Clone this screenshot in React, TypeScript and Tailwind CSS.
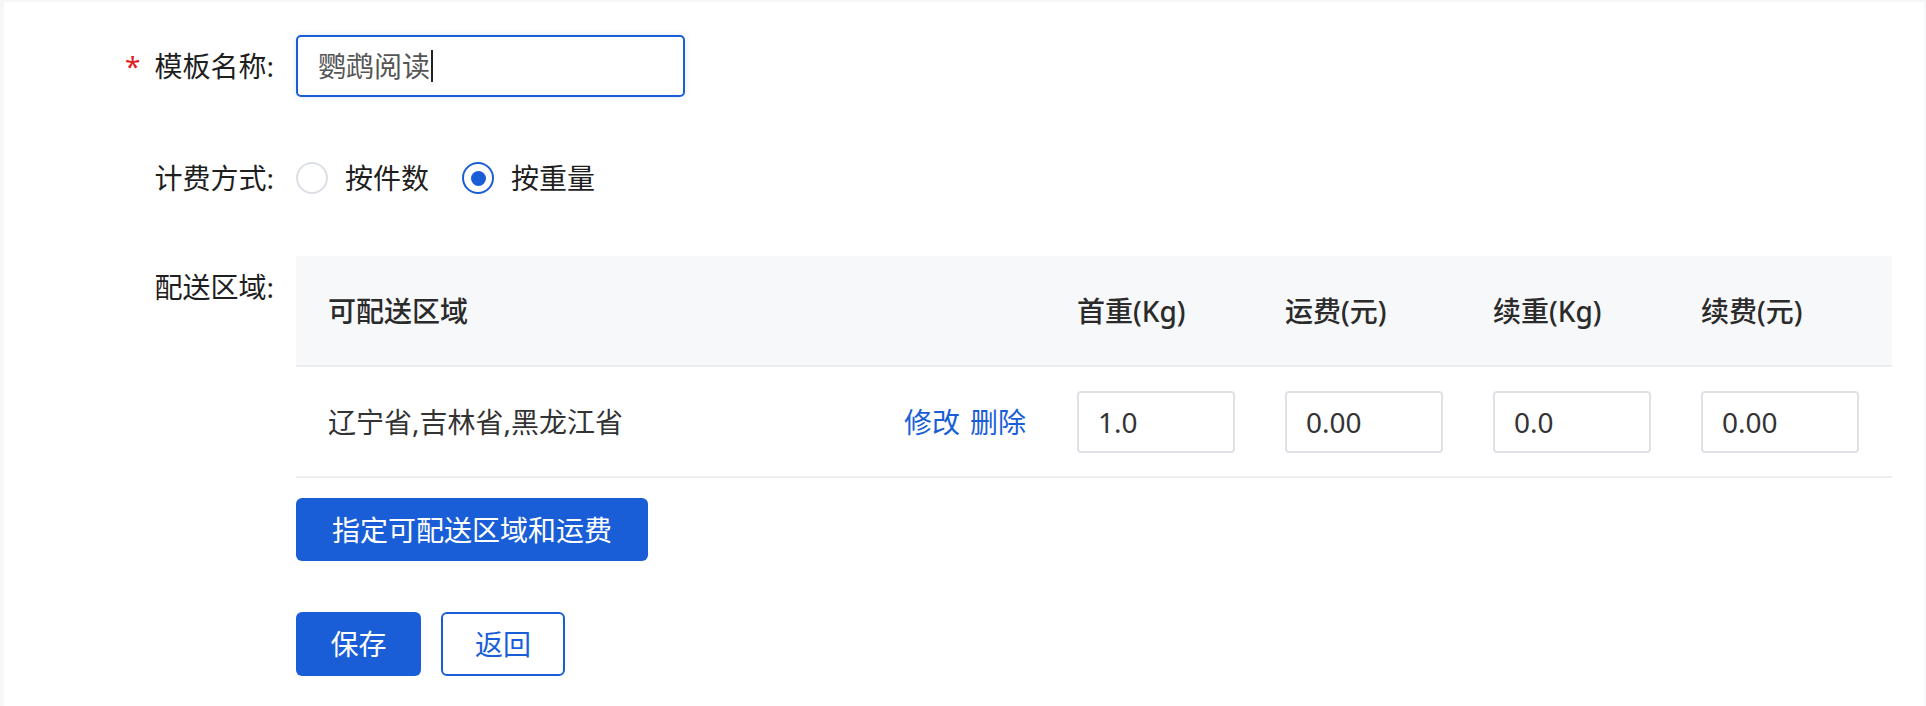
import React from 'react';

const font = { fontFamily: '"Noto Sans", "Noto Sans CJK SC", sans-serif' };

function Label({ text, required }: { text: string; required?: boolean }) {
  return (
    <div className="w-[292px] shrink-0 pr-[22px] text-right text-[28px] leading-[62px] text-[#1f1f1f]">
      {required && <span className="mr-[14px] text-[#e02020]">*</span>}
      {text}
    </div>
  );
}

function Radio({ checked, label }: { checked?: boolean; label: string }) {
  return (
    <label className="flex items-center">
      <span
        className={`flex h-[32px] w-[32px] items-center justify-center rounded-full border-2 bg-white ${
          checked ? 'border-[#1a5ed7]' : 'border-[#dcdfe6]'
        }`}
      >
        {checked && <span className="h-[15px] w-[15px] rounded-full bg-[#1a5ed7]" />}
      </span>
      <span className="ml-[17px] text-[28px] text-[#1f1f1f]">{label}</span>
    </label>
  );
}

function NumBox({ value }: { value: string }) {
  return (
    <div className="flex h-[62px] w-[158px] items-center rounded-[4px] border-2 border-[#dfe1e6] bg-white pl-[19px] text-[28px] text-[#333]">
      {value}
    </div>
  );
}

const cols = ['首重(Kg)', '运费(元)', '续重(Kg)', '续费(元)'];
const values = ['1.0', '0.00', '0.0', '0.00'];

export default function App() {
  return (
    <div className="min-h-[706px] bg-[#f5f6f8] pl-[4px] pr-[2px] pt-[2px]" style={font}>
      <div className="min-h-[704px] bg-white pr-[32px] pt-[33px]">
        {/* 模板名称 */}
        <div className="flex h-[62px] items-center">
          <Label text="模板名称:" required />
          <div className="flex h-[62px] w-[389px] items-center rounded-[5px] border-2 border-[#1a5ed7] pl-[20px] text-[28px] text-[#555] shadow-[0_0_6px_rgba(26,94,215,0.15)]">
            鹦鹉阅读
            <span className="ml-[1px] inline-block h-[32px] w-[2px] bg-[#222]" />
          </div>
        </div>

        {/* 计费方式 */}
        <div className="mt-[50px] flex h-[62px] items-center">
          <Label text="计费方式:" />
          <div className="flex items-center gap-[33px]">
            <Radio label="按件数" />
            <Radio label="按重量" checked />
          </div>
        </div>

        {/* 配送区域 */}
        <div className="mt-[47px] flex items-start">
          <Label text="配送区域:" />
          <div className="flex-1">
            <div className="grid h-[111px] grid-cols-[1fr_208px_208px_208px_208px] items-center border-b-2 border-[#eceef2] bg-[#f7f8fa] text-[28px] font-medium text-[#2b2b2b]">
              <div className="pl-[32px]">可配送区域</div>
              {cols.map((c) => (
                <div key={c} className="pl-[17px]">
                  {c}
                </div>
              ))}
            </div>
            <div className="grid h-[111px] grid-cols-[1fr_208px_208px_208px_208px] items-center border-b-2 border-[#eceef2] text-[28px] text-[#333]">
              <div className="flex items-center justify-between pl-[32px] pr-[34px]">
                <span>辽宁省,吉林省,黑龙江省</span>
                <span className="flex gap-[10px] text-[#1a5ed7]">
                  <span>修改</span>
                  <span>删除</span>
                </span>
              </div>
              {values.map((v, i) => (
                <div key={i} className="pl-[17px]">
                  <NumBox value={v} />
                </div>
              ))}
            </div>
            <button className="mt-[20px] h-[63px] rounded-[6px] bg-[#1a5ed7] px-[36px] text-[28px] text-white">
              指定可配送区域和运费
            </button>
          </div>
        </div>

        {/* actions */}
        <div className="mt-[51px] flex">
          <div className="w-[292px] shrink-0" />
          <div className="flex gap-[20px]">
            <button className="h-[64px] w-[125px] rounded-[6px] bg-[#1a5ed7] text-[28px] text-white">保存</button>
            <button className="h-[64px] w-[124px] rounded-[6px] border-2 border-[#1a5ed7] bg-white text-[28px] text-[#1a5ed7]">
              返回
            </button>
          </div>
        </div>
      </div>
    </div>
  );
}
